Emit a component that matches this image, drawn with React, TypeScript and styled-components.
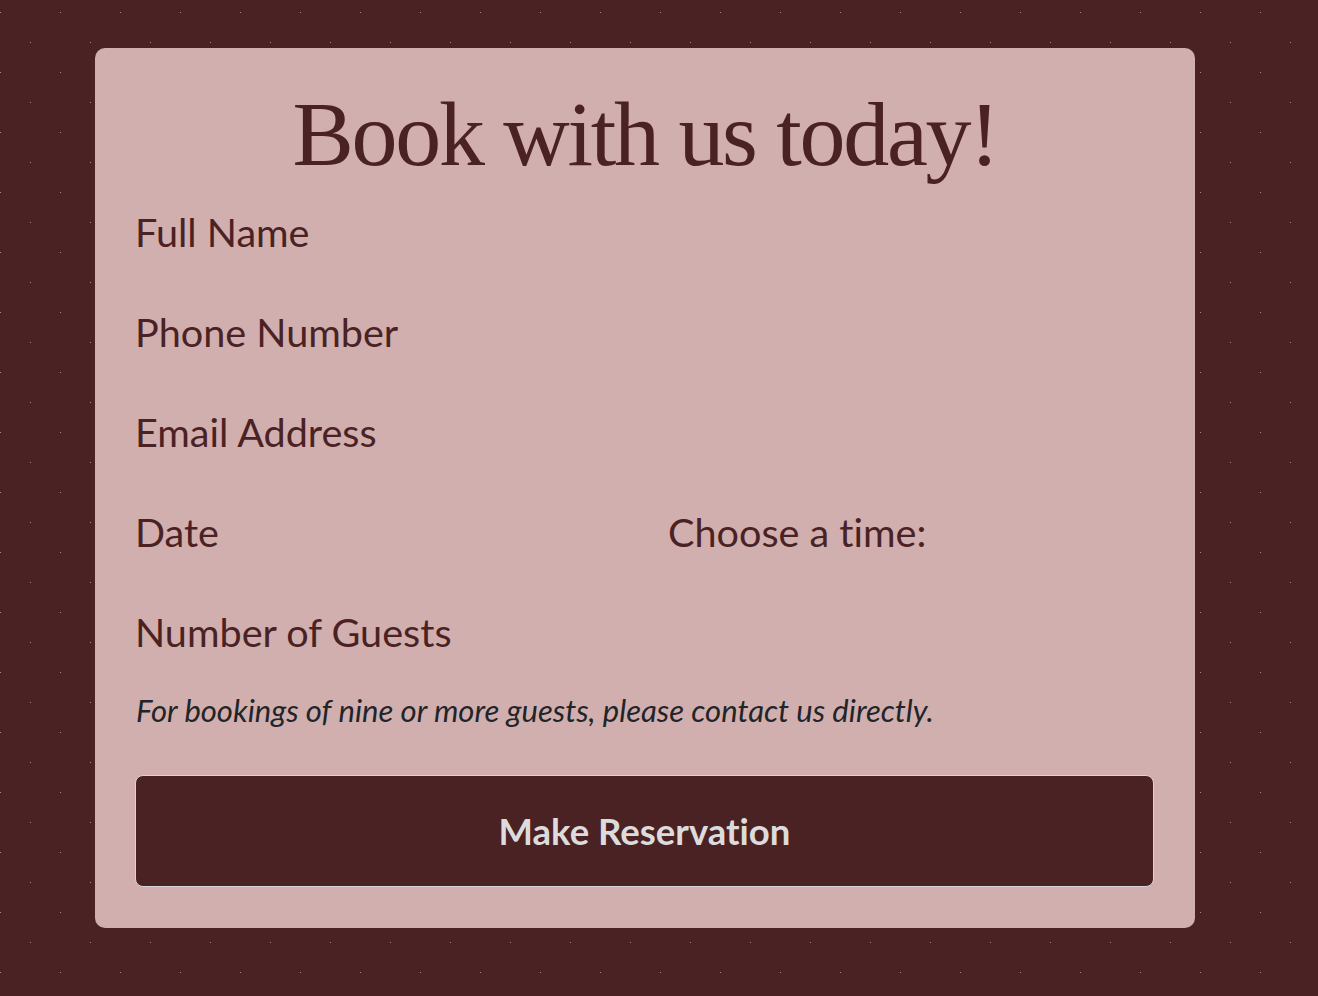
import React from "react";
import styled, { createGlobalStyle } from "styled-components";

const GlobalStyle = createGlobalStyle`
  html, body {
    margin: 0;
    padding: 0;
  }
  body {
    background-color: #4b2224;
    background-image:
      radial-gradient(circle at 0.5px 12.5px, #c87c74 0.9px, transparent 0.9px),
      radial-gradient(circle at 30.5px 42.5px, #c87c74 0.9px, transparent 0.9px);
    background-size: 60px 60px;
    min-height: 996px;
    font-family: "Lato", "Liberation Sans", sans-serif;
    font-variant-ligatures: none;
  }
`;

const Page = styled.main`
  padding: 48px 0 68px 95px;
`;

const Card = styled.form`
  width: 1100px;
  box-sizing: border-box;
  padding: 40px 41px 41px 41px;
  background: #d1afae;
  border-radius: 10px;
  display: flex;
  flex-direction: column;
`;

const Title = styled.h1`
  margin: 0 0 22px;
  font-family: "Liberation Serif", serif;
  font-weight: 400;
  font-size: 92px;
  line-height: 1;
  letter-spacing: -2.3px;
  text-align: center;
  color: #4b2224;
`;

const Field = styled.div`
  margin-bottom: 40px;
`;

const Row = styled.div`
  display: grid;
  grid-template-columns: 533px 1fr;
`;

const Label = styled.label`
  display: block;
  margin-left: -1px;
  font-family: "Lato", sans-serif;
  font-variant-ligatures: none;
  font-size: 39.6px;
  line-height: 60px;
  color: #4b2224;
`;

const Note = styled.p`
  margin: 26px 0 42px;
  font-family: "Lato", sans-serif;
  font-variant-ligatures: none;
  font-style: italic;
  font-size: 31px;
  line-height: 45px;
  color: #212529;
`;

const Button = styled.button`
  box-sizing: border-box;
  height: 112px;
  width: calc(100% + 1px);
  margin-left: -1px;
  background: #4b2224;
  border: 1.5px solid #d6d6d6;
  border-radius: 8px;
  color: #dcdcdc;
  font-family: "Lato", sans-serif;
  font-variant-ligatures: none;
  font-weight: 700;
  font-size: 36.5px;
  cursor: pointer;
`;

export default function App() {
  return (
    <>
      <GlobalStyle />
      <Page>
        <Card onSubmit={(e) => e.preventDefault()}>
          <Title>Book with us today!</Title>
          <Field>
            <Label>Full Name</Label>
          </Field>
          <Field>
            <Label>Phone Number</Label>
          </Field>
          <Field>
            <Label>Email Address</Label>
          </Field>
          <Row>
            <Field>
              <Label>Date</Label>
            </Field>
            <Field>
              <Label>Choose a time:</Label>
            </Field>
          </Row>
          <Label>Number of Guests</Label>
          <Note>For bookings of nine or more guests, please contact us directly.</Note>
          <Button type="submit">Make Reservation</Button>
        </Card>
      </Page>
    </>
  );
}
